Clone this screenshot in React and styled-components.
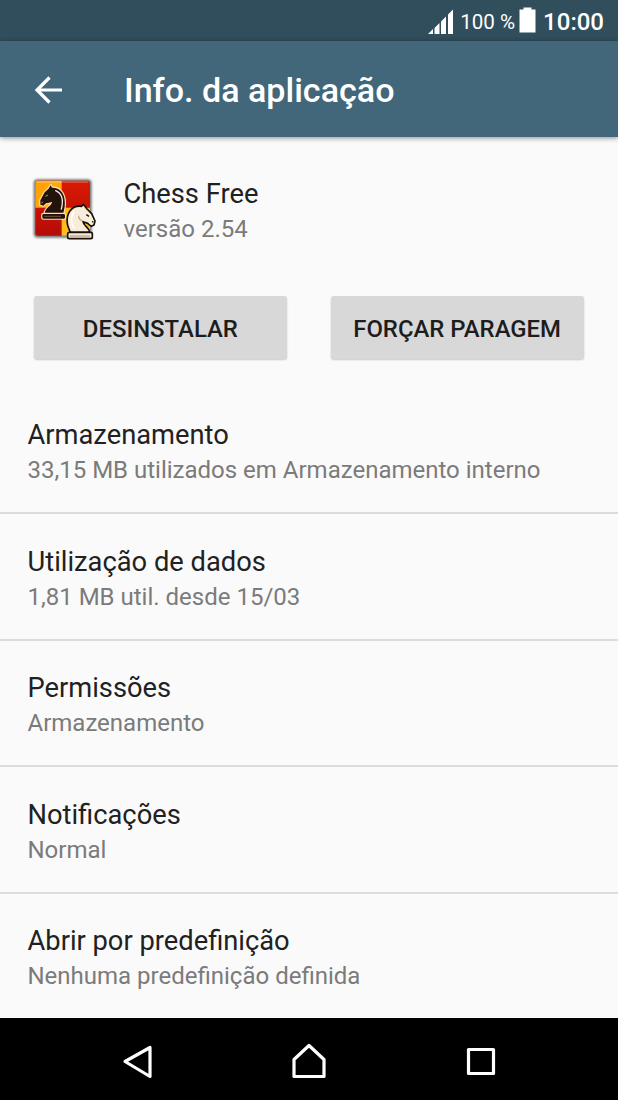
import React from 'react';
import styled, { createGlobalStyle, css } from 'styled-components';

const GlobalStyle = createGlobalStyle`
  * {
    box-sizing: border-box;
  }

  body {
    margin: 0;
    background: #fafafa;
    font-family: Roboto, 'Liberation Sans', sans-serif;
    color: #212121;
  }
`;

const Screen = styled.div`
  display: flex;
  flex-direction: column;
  width: 618px;
  height: 1100px;
  overflow: hidden;
  background: #fafafa;
`;

const StatusBar = styled.div`
  display: flex;
  flex: none;
  align-items: center;
  justify-content: flex-end;
  height: 41px;
  padding: 2px 14px 0 0;
  background: #304e5c;
  color: #fff;
`;

const SignalIcon = styled.svg`
  width: 26px;
  height: 26px;
  margin-right: 6px;
`;

const BatteryLevel = styled.span`
  margin-right: 4px;
  font-size: 20.6px;
  line-height: 38px;
`;

const BatteryIcon = styled.svg`
  width: 17px;
  height: 26px;
  margin: 0 7px 3px 0;
`;

const Clock = styled.span`
  font-size: 24px;
  font-weight: 500;
  line-height: 38px;
`;

const AppBar = styled.header`
  display: flex;
  flex: none;
  align-items: center;
  height: 96px;
  padding: 0 34px;
  background: #43677a;
  color: #fff;
  box-shadow: 0 1px 5px rgba(0, 0, 0, 0.45);
  z-index: 1;
`;

const BackButton = styled.button`
  display: flex;
  width: 90px;
  padding: 1px 0 0;
  border: 0;
  background: none;
  color: inherit;
`;

const AppBarTitle = styled.h1`
  margin: 2px 0 0;
  font-size: 34.1px;
  font-weight: 500;
  line-height: 40px;
`;

const Content = styled.main`
  flex: 1;
  min-height: 0;
  overflow: hidden;
`;

const AppHeader = styled.section`
  display: flex;
  align-items: flex-start;
  height: 159px;
  padding: 39px 32px 0;
`;

const AppIcon = styled.svg`
  width: 66px;
  height: 68px;
  margin: -1px 25.5px 0 0;
`;

const textLine = css`
  margin: 0;
  font-weight: 400;
  white-space: nowrap;
`;

const Title = styled.h2`
  ${textLine}
  font-size: 27.3px;
  line-height: 36px;
`;

const Summary = styled.p`
  ${textLine}
  font-size: 24px;
  line-height: 34px;
  color: #7b7b7b;
`;

const Actions = styled.div`
  display: grid;
  grid-template-columns: 1fr 1fr;
  gap: 44px;
  height: 91.6px;
  padding: 0 34.5px 28.6px 34px;
`;

const ActionButton = styled.button`
  padding: 2px 0 0;
  border: 0;
  border-radius: 3px;
  background: #d8d8d8;
  color: #1d1d1d;
  font: 500 23.9px Roboto, 'Liberation Sans', sans-serif;
  text-transform: uppercase;
  box-shadow: 0 1px 2px rgba(0, 0, 0, 0.2);
`;

const SettingsList = styled.ul`
  margin: 0;
  padding: 0;
  list-style: none;
`;

const SettingsItem = styled.li`
  height: 126.55px;
  padding: 29.6px 27.5px 0;
  border-bottom: 2px solid #dcdcdc;

  &:last-child {
    border-bottom: 0;
  }
`;

const NavigationBar = styled.nav`
  display: flex;
  flex: none;
  align-items: center;
  justify-content: space-between;
  height: 82px;
  padding: 5px 119px 0;
  background: #000;
`;

const NavIcon = styled.svg`
  width: 38px;
  height: 38px;
  fill: none;
  stroke: #fff;
  stroke-width: 3.2;
  stroke-linejoin: round;
`;

const settings = [
  { title: 'Armazenamento', summary: '33,15 MB utilizados em Armazenamento interno' },
  { title: 'Utilização de dados', summary: '1,81 MB util. desde 15/03' },
  { title: 'Permissões', summary: 'Armazenamento' },
  { title: 'Notificações', summary: 'Normal' },
  { title: 'Abrir por predefinição', summary: 'Nenhuma predefinição definida' },
];

const ChessIcon = () => (
  <AppIcon viewBox='36 30 198 204'>
    <defs>
      <linearGradient id='red' x1='0' y1='0' x2='0' y2='1'>
        <stop offset='0' stopColor='#d81a02'/>
        <stop offset='1' stopColor='#b40c08'/>
      </linearGradient>
      <linearGradient id='yellow' x1='0' y1='0' x2='1' y2='1'>
        <stop offset='0' stopColor='#ff9c00'/>
        <stop offset='1' stopColor='#ffcb30'/>
      </linearGradient>
      <filter id='edge' x='-10%' y='-10%' width='120%' height='120%'>
        <feGaussianBlur stdDeviation='2.5'/>
      </filter>
    </defs>
    <rect x='41' y='43' width='174' height='175' rx='12' fill='#777' filter='url(#edge)'/>
    <rect x='46' y='47' width='164' height='165' rx='7' fill='url(#red)'/>
    <path d='M53 47h72v81H46V54q0-7 7-7zM125 128h85v77q0 7-7 7h-78z' fill='url(#yellow)'/>
    <path d='M50 51h155' stroke='#fff' strokeOpacity='0.4' strokeWidth='3'/>
    {/* black knight */}
    <g fill='#24130c' stroke='#ffdfae' strokeWidth='7' strokeLinejoin='round' paintOrder='stroke'>
      <path d='M92 61l4 7c28-2 42 24 38 57l-4 20H74c2-19 22-22 22-35-8 4-12 2-18 5l-8 7-9-3v-13l13-24 11-10z'/>
      <rect x='67' y='147' width='68' height='14' rx='4'/>
    </g>
    <path d='M107 77c18 8 24 28 17 55' fill='none' stroke='#f7e8da' strokeWidth='4' strokeLinecap='round'/>
    <path d='M76 94l8-4M64 114l5-3' stroke='#c98a55' strokeWidth='3'/>
    <path d='M73 154h50' stroke='#70503e' strokeWidth='3'/>
    {/* white knight */}
    <g fill='#f8eddb' stroke='#17100b' strokeWidth='5' strokeLinejoin='round'>
      <path d='M190 118l-5 6c-31-4-47 22-43 52 1 12 8 19 8 26h59c-1-15-18-18-20-32 8 4 13 2 17 8l8 6 8-4 3-12-10-22-14-14z'/>
      <rect x='143' y='202' width='74' height='19' rx='5'/>
    </g>
    <path d='M162 140c-10 14-9 33 0 50' fill='none' stroke='#fff' strokeWidth='5'/>
    <path d='M187 167c-8-2-11-7-11-15M149 213h61' fill='none' stroke='#c6a98b' strokeWidth='4'/>
    <path d='M199 149l8 5M216 170l4 1' stroke='#17100b' strokeWidth='4'/>
  </AppIcon>
);

const App = () => (
  <Screen>
    <GlobalStyle/>
    <StatusBar>
      <SignalIcon viewBox='0 0 26 26' fill='#fff'>
        <path d='M0 25l5-5v5zM6.5 25v-6l5-5v11zM13 25v-12.500l5-5v17.500zM20 25v-19.500l5-5v24.500z'/>
      </SignalIcon>
      <BatteryLevel>100 %</BatteryLevel>
      <BatteryIcon viewBox='0 0 17 26' fill='#fff'>
        <path d='M4.500 0.500h8v2h4v23H0.500v-23h4z'/>
      </BatteryIcon>
      <Clock>10:00</Clock>
    </StatusBar>
    <AppBar>
      <BackButton aria-label='Voltar'>
        <svg width='29' height='28' viewBox='0 0 29 28' fill='none' stroke='#fff' strokeWidth='3.2'>
          <path d='M15.500 1.500L3 14l12.500 12.500M3 14h25'/>
        </svg>
      </BackButton>
      <AppBarTitle>Info. da aplicação</AppBarTitle>
    </AppBar>
    <Content>
      <AppHeader>
        <ChessIcon/>
        <div>
          <Title>Chess Free</Title>
          <Summary>versão 2.54</Summary>
        </div>
      </AppHeader>
      <Actions>
        <ActionButton>Desinstalar</ActionButton>
        <ActionButton>Forçar paragem</ActionButton>
      </Actions>
      <SettingsList>
        {settings.map(({ title, summary }) => (
          <SettingsItem key={title}>
            <Title>{title}</Title>
            <Summary>{summary}</Summary>
          </SettingsItem>
        ))}
      </SettingsList>
    </Content>
    <NavigationBar>
      <NavIcon viewBox='0 0 38 38'>
        <path d='M6 18.500L31 4.500v29z'/>
      </NavIcon>
      <NavIcon viewBox='0 0 38 38'>
        <path d='M19 2.500L34 16.500v17H4v-17z'/>
      </NavIcon>
      <NavIcon viewBox='0 0 38 38'>
        <rect x='7.500' y='6.500' width='25' height='24'/>
      </NavIcon>
    </NavigationBar>
  </Screen>
);

export default App;
